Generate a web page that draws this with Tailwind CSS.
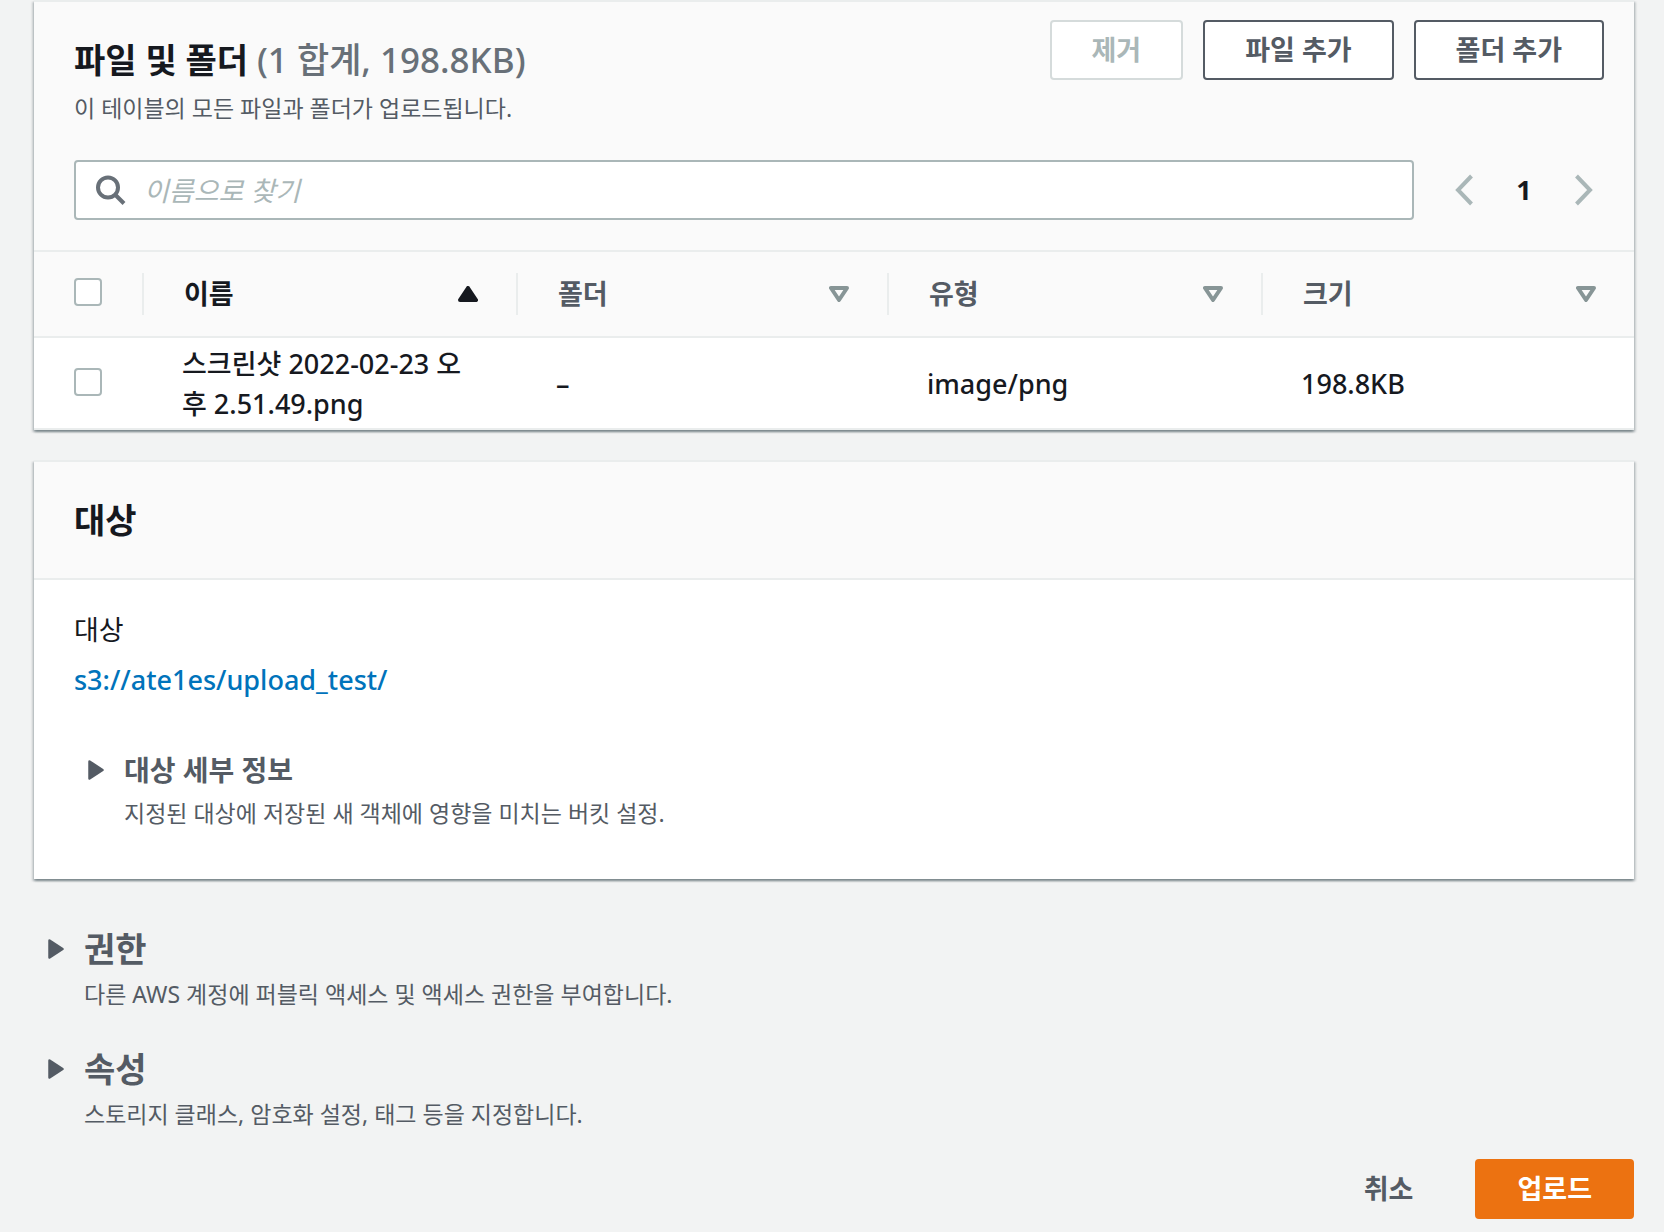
<!DOCTYPE html>
<html lang="ko">
  <head>
    <meta charset="UTF-8" />
    <meta name="viewport" content="width=device-width, initial-scale=1.0" />
    <title>업로드</title>
    <!-- Tailwind CSS CDN -->
    <script src="https://cdn.jsdelivr.net/npm/@tailwindcss/browser@4"></script>
  </head>
  <body
    class="min-h-screen bg-[#f2f3f3] pr-[30px] pb-3 pl-[34px] font-['Noto_Sans','Noto_Sans_CJK_KR',sans-serif] text-[27px] leading-10 text-[#16191f]"
  >
    <!-- Files and folders -->
    <section
      class="border-t-2 border-[#eaeded] bg-white shadow-[0_2px_2px_0_rgba(0,28,36,0.3),2px_2px_2px_0_rgba(0,28,36,0.15),-2px_2px_2px_0_rgba(0,28,36,0.15)]"
    >
      <div class="bg-[#fafafa] pt-[18px] pr-[30px] pb-[30px] pl-10">
        <div class="flex items-start justify-between">
          <div class="pt-[18px]">
            <h2 class="text-[34px] leading-[44px] font-bold">
              파일 및 폴더
              <span class="text-[35px] font-medium text-[#687078]">(1 합계, 198.8KB)</span>
            </h2>
            <p class="mt-[10px] text-[23px] leading-8 text-[#545b64]">
              이 테이블의 모든 파일과 폴더가 업로드됩니다.
            </p>
          </div>
          <div class="flex gap-5 font-bold">
            <button
              type="button"
              disabled
              class="h-[60px] rounded-sm border-2 border-[#d5dbdb] bg-white px-10 text-[#aab7b8]"
            >
              제거
            </button>
            <button
              type="button"
              class="h-[60px] rounded-sm border-2 border-[#545b64] bg-white px-10 text-[#545b64]"
            >
              파일 추가
            </button>
            <button
              type="button"
              class="h-[60px] rounded-sm border-2 border-[#545b64] bg-white px-10 text-[#545b64]"
            >
              폴더 추가
            </button>
          </div>
        </div>

        <div class="mt-9 flex items-center">
          <label
            class="flex h-[60px] flex-1 items-center gap-[18px] rounded-sm border-2 border-[#aab7b8] bg-white pl-5"
          >
            <svg
              class="size-[30px] shrink-0"
              viewBox="0 0 30 30"
              fill="none"
              stroke="#687078"
              stroke-width="4"
            >
              <circle cx="12" cy="12.500" r="10" />
              <path d="M19 19.500L28 28.500" />
            </svg>
            <input
              type="text"
              aria-label="이름으로 찾기"
              placeholder="이름으로 찾기"
              class="h-full min-w-0 flex-1 outline-none placeholder:text-[#aab7b8] placeholder:italic"
            />
          </label>
          <nav class="flex w-[190px] items-center justify-between pr-[10px] pl-10">
            <button type="button" disabled aria-label="이전">
              <svg
                class="h-8 w-5"
                viewBox="0 0 20 32"
                fill="none"
                stroke="#aab7b8"
                stroke-width="4"
              >
                <path d="M17.500 2L4 16l13.500 14" />
              </svg>
            </button>
            <button type="button" class="font-bold">1</button>
            <button type="button" disabled aria-label="다음">
              <svg
                class="h-8 w-5"
                viewBox="0 0 20 32"
                fill="none"
                stroke="#aab7b8"
                stroke-width="4"
              >
                <path d="M2.500 2L16 16L2.500 30" />
              </svg>
            </button>
          </nav>
        </div>
      </div>

      <table class="w-full table-fixed border-collapse text-left">
        <thead class="border-y-2 border-[#eaeded] bg-[#fafafa] text-[#545b64]">
          <tr class="h-[86px]">
            <th class="w-[110px] p-0">
              <div class="flex h-[42px] items-center border-r-2 border-[#eaeded] pb-1 pl-10">
                <input
                  type="checkbox"
                  aria-label="모두 선택"
                  class="size-7 appearance-none rounded-sm border-2 border-[#aab7b8] bg-white"
                />
              </div>
            </th>
            <th class="w-[374px] p-0 text-[#16191f]">
              <div
                class="flex h-[42px] items-center justify-between border-r-2 border-[#eaeded] pr-[38px] pl-10"
              >
                이름
                <svg class="h-4 w-5" viewBox="0 0 20 16">
                  <path
                    d="M10 2L18 14H2Z"
                    fill="#16191f"
                    stroke="#16191f"
                    stroke-width="4"
                    stroke-linejoin="round"
                  />
                </svg>
              </div>
            </th>
            <th class="p-0">
              <div
                class="flex h-[42px] items-center justify-between border-r-2 border-[#eaeded] pr-[38px] pl-10"
              >
                폴더
                <svg class="h-4 w-5" viewBox="0 0 20 16">
                  <path
                    d="M2 2H18L10 14Z"
                    fill="none"
                    stroke="#879596"
                    stroke-width="4"
                    stroke-linejoin="round"
                  />
                </svg>
              </div>
            </th>
            <th class="w-[374px] p-0">
              <div
                class="flex h-[42px] items-center justify-between border-r-2 border-[#eaeded] pr-[38px] pl-10"
              >
                유형
                <svg class="h-4 w-5" viewBox="0 0 20 16">
                  <path
                    d="M2 2H18L10 14Z"
                    fill="none"
                    stroke="#879596"
                    stroke-width="4"
                    stroke-linejoin="round"
                  />
                </svg>
              </div>
            </th>
            <th class="p-0">
              <div class="flex h-[42px] items-center justify-between pr-[38px] pl-10">
                크기
                <svg class="h-4 w-5" viewBox="0 0 20 16">
                  <path
                    d="M2 2H18L10 14Z"
                    fill="none"
                    stroke="#879596"
                    stroke-width="4"
                    stroke-linejoin="round"
                  />
                </svg>
              </div>
            </th>
          </tr>
        </thead>
        <tbody class="font-medium">
          <tr class="border-b-2 border-[#eaeded]">
            <td class="pb-0.5 pl-10">
              <input
                type="checkbox"
                aria-label="스크린샷 2022-02-23 오후 2.51.49.png 선택"
                class="block size-7 appearance-none rounded-sm border-2 border-[#aab7b8] bg-white"
              />
            </td>
            <td class="px-[38px] pt-1.5 pb-1 break-all">스크린샷 2022-02-23 오후 2.51.49.png</td>
            <td class="px-[38px] pt-1.5 pb-1">–</td>
            <td class="px-[38px] pt-1.5 pb-1">image/png</td>
            <td class="px-[38px] pt-1.5 pb-1">198.8KB</td>
          </tr>
        </tbody>
      </table>
    </section>

    <!-- Destination -->
    <section
      class="mt-[30px] border-t-2 border-[#eaeded] bg-white shadow-[0_2px_2px_0_rgba(0,28,36,0.3),2px_2px_2px_0_rgba(0,28,36,0.15),-2px_2px_2px_0_rgba(0,28,36,0.15)]"
    >
      <div class="border-b-2 border-[#eaeded] bg-[#fafafa] px-10 py-9">
        <h2 class="text-[34px] leading-[44px] font-bold">대상</h2>
      </div>
      <div class="px-10 pt-[30px] pb-[50px]">
        <div>대상</div>
        <a href="#" class="mt-[10px] inline-block font-medium text-[#0073bb]"
          >s3://ate1es/upload_test/</a
        >
        <details class="mt-[50px] pl-3 text-[#545b64]">
          <summary class="flex cursor-pointer list-none items-start gap-[18px]">
            <svg class="mt-[10px] h-5 w-5 shrink-0" viewBox="0 0 20 20">
              <path
                d="M3.500 1.500L16.500 10L3.500 18.500Z"
                fill="#545b64"
                stroke="#545b64"
                stroke-width="2.500"
                stroke-linejoin="round"
              />
            </svg>
            <div>
              <h3 class="text-[28px] font-bold">대상 세부 정보</h3>
              <p class="mt-[7px] text-[23px] leading-8">
                지정된 대상에 저장된 새 객체에 영향을 미치는 버킷 설정.
              </p>
            </div>
          </summary>
        </details>
      </div>
    </section>

    <!-- Permissions and properties -->
    <div class="mt-12 flex flex-col gap-[37px] pl-3 text-[#545b64]">
      <details>
        <summary class="flex cursor-pointer list-none items-start gap-[18px]">
          <svg class="mt-3 h-5 w-5 shrink-0" viewBox="0 0 20 20">
            <path
              d="M3.500 1.500L16.500 10L3.500 18.500Z"
              fill="#545b64"
              stroke="#545b64"
              stroke-width="2.500"
              stroke-linejoin="round"
            />
          </svg>
          <div>
            <h2 class="text-[34px] leading-[44px] font-bold">권한</h2>
            <p class="mt-[7px] text-[23px] leading-8">
              다른 AWS 계정에 퍼블릭 액세스 및 액세스 권한을 부여합니다.
            </p>
          </div>
        </summary>
      </details>
      <details>
        <summary class="flex cursor-pointer list-none items-start gap-[18px]">
          <svg class="mt-3 h-5 w-5 shrink-0" viewBox="0 0 20 20">
            <path
              d="M3.500 1.500L16.500 10L3.500 18.500Z"
              fill="#545b64"
              stroke="#545b64"
              stroke-width="2.500"
              stroke-linejoin="round"
            />
          </svg>
          <div>
            <h2 class="text-[34px] leading-[44px] font-bold">속성</h2>
            <p class="mt-[7px] text-[23px] leading-8">
              스토리지 클래스, 암호화 설정, 태그 등을 지정합니다.
            </p>
          </div>
        </summary>
      </details>
    </div>

    <!-- Actions -->
    <div class="mt-[29px] flex justify-end gap-5 font-bold">
      <button
        type="button"
        class="h-[60px] rounded-sm border-2 border-transparent px-10 text-[#545b64]"
      >
        취소
      </button>
      <button
        type="button"
        class="h-[60px] rounded-sm border-2 border-[#ec7211] bg-[#ec7211] px-10 text-white"
      >
        업로드
      </button>
    </div>
  </body>
</html>
